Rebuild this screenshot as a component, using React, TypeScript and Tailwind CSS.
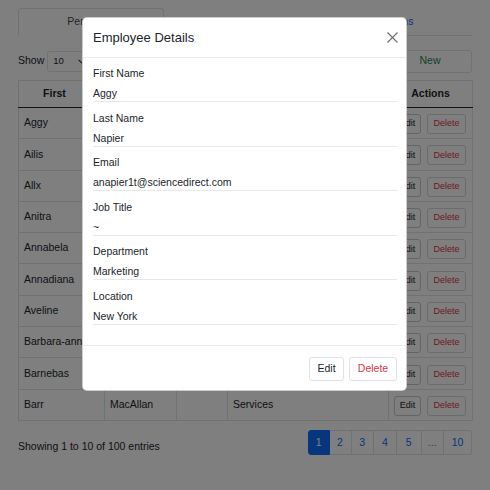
import React from "react";

const rows: [string, string, string, string][] = [
  ["Aggy", "", "", ""],
  ["Ailis", "", "", ""],
  ["Allx", "", "", ""],
  ["Anitra", "", "", ""],
  ["Annabela", "", "", ""],
  ["Annadiana", "", "", ""],
  ["Aveline", "", "", ""],
  ["Barbara-anne", "", "", ""],
  ["Barnebas", "", "", ""],
  ["Barr", "MacAllan", "", "Services"],
];

const fields: [string, string][] = [
  ["First Name", "Aggy"],
  ["Last Name", "Napier"],
  ["Email", "anapier1t@sciencedirect.com"],
  ["Job Title", "~"],
  ["Department", "Marketing"],
  ["Location", "New York"],
];

export default function App() {
  return (
    <div className="relative w-[490px] h-[490px] overflow-hidden bg-white font-['Liberation_Sans',Arial,sans-serif] text-[#212529] text-[10.5px]">
      {/* page */}
      <div className="px-[18px] pt-[8px]">
        {/* tabs */}
        <div className="flex h-[28px] border-b border-[#dee2e6]">
          <div className="w-[146px] h-[28px] border border-[#dee2e6] border-b-white rounded-t-[4px] flex items-center justify-center text-[#495057] bg-white">
            Personnel
          </div>
          <div className="w-[146px]" />
          <div className="flex-1 flex items-center justify-center text-[#0d6efd]">Locations</div>
        </div>

        {/* controls */}
        <div className="mt-[14px] h-[22px] flex items-center justify-between">
          <div className="flex items-center">
            <span>Show</span>
            <div className="ml-[3px] w-[46px] h-[21px] border border-[#dee2e6] rounded-[3px] flex items-center justify-between pl-[5px] pr-[7px]">
              <span className="text-[9.5px]">10</span>
              <svg width="7" height="5" viewBox="0 0 7 5">
                <path d="M0.6 0.8 L3.5 3.8 L6.4 0.8" fill="none" stroke="#343a40" strokeWidth="1.1" />
              </svg>
            </div>
          </div>
          <div className="w-[84px] h-[23px] border border-[#dee2e6] rounded-[3px] flex items-center justify-center text-[#198754]">
            New
          </div>
        </div>

        {/* table */}
        <table className="mt-[8px] w-[454px] table-fixed border-collapse">
          <colgroup>
            <col className="w-[86px]" />
            <col className="w-[72px]" />
            <col className="w-[51px]" />
            <col className="w-[161px]" />
            <col className="w-[84px]" />
          </colgroup>
          <thead>
            <tr className="h-[27px]">
              <th className="border border-[#dee2e6] border-b-[#212529] font-bold text-center pr-[14px]">First</th>
              <th className="border border-[#dee2e6] border-b-[#212529]" />
              <th className="border border-[#dee2e6] border-b-[#212529]" />
              <th className="border border-[#dee2e6] border-b-[#212529]" />
              <th className="border border-[#dee2e6] border-b-[#212529] font-bold text-center">Actions</th>
            </tr>
          </thead>
          <tbody>
            {rows.map((r) => (
              <tr key={r[0]} className="h-[31.3px]">
                <td className="border border-[#dee2e6] px-[5px] whitespace-nowrap overflow-hidden">{r[0]}</td>
                <td className="border border-[#dee2e6] px-[5px] whitespace-nowrap overflow-hidden">{r[1]}</td>
                <td className="border border-[#dee2e6] px-[5px]">{r[2]}</td>
                <td className="border border-[#dee2e6] px-[5px]">{r[3]}</td>
                <td className="border border-[#dee2e6] pl-[5px] pr-[5px]">
                  <div className="flex gap-[6px] items-center pt-[2px]">
                    <div className="w-[27px] h-[20px] border border-[#c4c8cc] rounded-[3px] flex items-center justify-center text-[9px]">
                      Edit
                    </div>
                    <div className="w-[39px] h-[20px] border border-[#d3d6da] rounded-[3px] flex items-center justify-center text-[9px] text-[#dc3545]">
                      Delete
                    </div>
                  </div>
                </td>
              </tr>
            ))}
          </tbody>
        </table>

        {/* footer */}
        <div className="mt-[9px] flex items-center justify-between">
          <span className="mt-[8px]">Showing 1 to 10 of 100 entries</span>
          <div className="flex h-[25px]">
            <div className="w-[21.5px] h-[25px] flex items-center justify-center bg-[#0d6efd] text-white border border-[#0d6efd] rounded-l-[3px]">1</div>
            <div className="w-[22px] h-[25px] flex items-center justify-center text-[#0d6efd] border border-[#dee2e6] border-l-0">2</div>
            <div className="w-[22.5px] h-[25px] flex items-center justify-center text-[#0d6efd] border border-[#dee2e6] border-l-0">3</div>
            <div className="w-[23px] h-[25px] flex items-center justify-center text-[#0d6efd] border border-[#dee2e6] border-l-0">4</div>
            <div className="w-[24.5px] h-[25px] flex items-center justify-center text-[#0d6efd] border border-[#dee2e6] border-l-0">5</div>
            <div className="w-[22.5px] h-[25px] flex items-center justify-center text-[#6c757d] border border-[#dee2e6] border-l-0">...</div>
            <div className="w-[28px] h-[25px] flex items-center justify-center text-[#0d6efd] border border-[#dee2e6] border-l-0 rounded-r-[3px]">10</div>
          </div>
        </div>
      </div>

      {/* backdrop */}
      <div className="absolute inset-0 bg-black/50" />

      {/* modal */}
      <div className="absolute left-[82px] top-[17px] w-[325px] bg-white border border-black/20 rounded-[5px] overflow-hidden">
        <div className="h-[40px] border-b border-[#e9ecef] flex items-center justify-between pl-[10px] pr-[8px]">
          <span className="text-[13px]">Employee Details</span>
          <svg width="11" height="11" viewBox="0 0 11 11">
            <path d="M0.5 0.5 L10.5 10.5 M10.5 0.5 L0.5 10.5" stroke="#6b6b6b" strokeWidth="1.1" fill="none" />
          </svg>
        </div>
        <div className="pt-[8px] pb-[12px] pl-[10px] pr-[9px]">
          {fields.map(([label, value]) => (
            <div key={label} className="mb-[8.5px]">
              <div className="leading-[15px]">{label}</div>
              <div className="mt-[5px] leading-[15px] border-b border-[#e5e7eb]">{value}</div>
            </div>
          ))}
        </div>
        <div className="border-t border-[#e9ecef] pt-[11px] pb-[9px] pr-[9px] flex justify-end gap-[5px]">
          <div className="w-[35px] h-[24px] border border-[#dee2e6] rounded-[3px] flex items-center justify-center">Edit</div>
          <div className="w-[48px] h-[24px] border border-[#dee2e6] rounded-[3px] flex items-center justify-center text-[#dc3545]">Delete</div>
        </div>
      </div>
    </div>
  );
}
